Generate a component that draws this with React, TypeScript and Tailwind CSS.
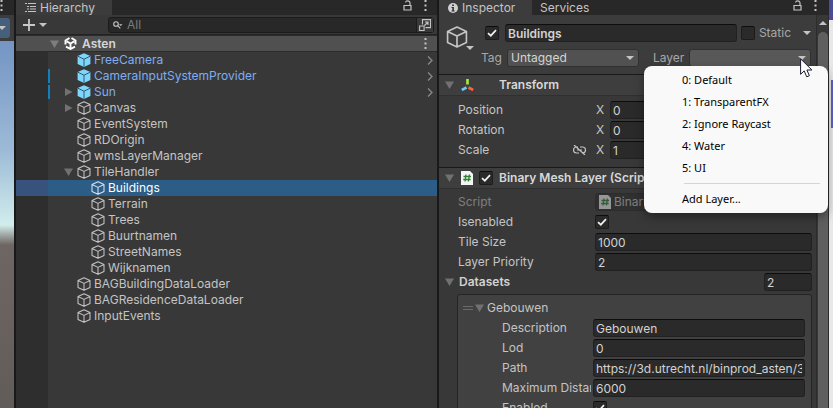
import type { ReactNode } from "react";

type NodeKind = "prefab" | "object";

interface TreeNode {
  name: string;
  kind: NodeKind;
  depth: number;
  fold?: "open" | "closed";
  overridden?: boolean;
  selected?: boolean;
}

const nodes: TreeNode[] = [
  { name: "FreeCamera", kind: "prefab", depth: 0 },
  { name: "CameraInputSystemProvider", kind: "prefab", depth: 0, overridden: true },
  { name: "Sun", kind: "prefab", depth: 0, fold: "closed", overridden: true },
  { name: "Canvas", kind: "object", depth: 0, fold: "closed" },
  { name: "EventSystem", kind: "object", depth: 0 },
  { name: "RDOrigin", kind: "object", depth: 0 },
  { name: "wmsLayerManager", kind: "object", depth: 0 },
  { name: "TileHandler", kind: "object", depth: 0, fold: "open" },
  { name: "Buildings", kind: "object", depth: 1, selected: true },
  { name: "Terrain", kind: "object", depth: 1 },
  { name: "Trees", kind: "object", depth: 1 },
  { name: "Buurtnamen", kind: "object", depth: 1 },
  { name: "StreetNames", kind: "object", depth: 1 },
  { name: "Wijknamen", kind: "object", depth: 1 },
  { name: "BAGBuildingDataLoader", kind: "object", depth: 0 },
  { name: "BAGResidenceDataLoader", kind: "object", depth: 0 },
  { name: "InputEvents", kind: "object", depth: 0 },
];

const layers = ["0: Default", "1: TransparentFX", "2: Ignore Raycast", "4: Water", "5: UI"];

function Cube({ className = "size-[14px]" }: { className?: string }) {
  return (
    <svg viewBox="0 0 14 14" className={className} fill="none" stroke="currentColor" strokeWidth="1.05" strokeLinejoin="round">
      <path d="M7 .7 13 3.5v7L7 13.3 1 10.5v-7zM1 3.5l6 2.9 6-2.9M7 6.4v6.9" />
    </svg>
  );
}

function PrefabCube() {
  return (
    <svg viewBox="0 0 14 14" className="size-[14px]">
      <path d="M7 .2 13.4 3v8L7 13.9.6 11V3z" fill="#7fd6fd" />
      <path d="M.8 3.2 7 6.2l6.2-3M7 6.2v7.6" fill="none" stroke="#2e5a70" strokeWidth="1" />
    </svg>
  );
}

function Triangle({ closed = false, className = "text-[#717171]" }: { closed?: boolean; className?: string }) {
  return (
    <svg viewBox="0 0 9 8" className={`h-2 w-[9px] shrink-0 ${className}`} fill="currentColor">
      {closed ? <path d="M1 0 8.500 4 1 8z" /> : <path d="M0 .5h9L4.500 8z" />}
    </svg>
  );
}

function Caret({ className = "" }: { className?: string }) {
  return (
    <svg viewBox="0 0 8 4" className={`h-1 w-2 shrink-0 ${className}`} fill="#c4c4c4">
      <path d="M0 0h8L4 4z" />
    </svg>
  );
}

function Lock() {
  return (
    <svg viewBox="0 0 9 12" className="h-3 w-[9px]" fill="none" stroke="#c4c4c4" strokeWidth="1.2">
      <path d="M1 6.500h7v4.500H1zM7 6.500V3.700C7 1.500 3 1 2.500 3.500" />
    </svg>
  );
}

function Dots() {
  return (
    <svg viewBox="0 0 3 11" className="h-[11px] w-[3px]" fill="#c4c4c4">
      <path d="M.5 0h2v2h-2zM.5 4.500h2v2h-2zM.5 9h2v2h-2z" />
    </svg>
  );
}

function ScriptIcon() {
  return (
    <svg viewBox="0 0 12 14" className="h-[14px] w-3 shrink-0">
      <path d="M0 0h9l3 3v11H0z" fill="#f4f4f4" />
      <path d="M5 3.500 4 10.500M8.400 3.500 7.400 10.500M2.500 5.500h7.500M2.200 8.500h7.500" stroke="#2f8136" strokeWidth="1.300" fill="none" />
    </svg>
  );
}

function Check({ label, checked = false }: { label: string; checked?: boolean }) {
  return (
    <span className="grid size-[14px] shrink-0">
      <input
        type="checkbox"
        aria-label={label}
        defaultChecked={checked}
        className="peer col-start-1 row-start-1 size-[14px] appearance-none rounded-[2px] border border-[#1c1c1c] border-t-[#0d0d0d] bg-[#2a2a2a]"
      />
      <svg viewBox="0 0 14 14" className="pointer-events-none invisible col-start-1 row-start-1 size-[14px] peer-checked:visible" fill="none" stroke="#f0f0f0" strokeWidth="1.700">
        <path d="M3 7.200 5.800 9.700 11 4.200" />
      </svg>
    </span>
  );
}

const fieldClass =
  "h-[18px] min-w-0 rounded-[3px] border border-[#212121] border-t-[#0d0d0d] bg-[#2a2a2a] px-[2px] text-[#d2d2d2] outline-none";

function Row({ id, label, children }: { id?: string; label: string; children: ReactNode }) {
  return (
    <div className="flex h-5 items-center">
      <label htmlFor={id} className="w-[137px] shrink-0">{label}</label>
      {children}
    </div>
  );
}

function DataRow({ id, label, children }: { id?: string; label: string; children: ReactNode }) {
  return (
    <div className="flex h-5 items-center gap-[2px]">
      <label htmlFor={id} className="w-[89px] shrink-0 overflow-hidden whitespace-nowrap">{label}</label>
      {children}
    </div>
  );
}

function SceneEdge() {
  return (
    <div className="flex w-4 shrink-0 flex-col border-r-2 border-[#191919] bg-[#3c3c3c]">
      <div className="h-[15px] bg-[#282828]"><Dots /></div>
      <div className="flex h-[26px] items-center">
        <div className="flex h-5 w-[10px] items-center rounded-r-[3px] bg-[#46607c]"><Caret className="-ml-0.5" /></div>
      </div>
      <div className="h-[184px] bg-linear-to-b from-[#7494c3] via-[#9dbbd7] via-60% to-[#d2edec]" />
      <div className="h-[20px] bg-linear-to-b from-[#d2edec] to-[#6e6662]" />
      <div className="flex-1 bg-linear-to-b from-[#6e6662] to-[#625c58]" />
    </div>
  );
}

function Hierarchy() {
  return (
    <section aria-label="Hierarchy" className="flex w-[423px] shrink-0 flex-col border-r-2 border-[#191919]">
      <header className="flex h-[15px] items-center justify-between bg-[#282828] pr-[10px]">
        <div className="flex h-full w-24 items-center gap-1 bg-[#3c3c3c] pl-[9px]">
          <svg viewBox="0 0 11 9" className="h-[9px] w-[11px]" stroke="#c4c4c4" fill="none">
            <path d="M0 .5h2M3 .5h8M2 3.500h2M5 3.500h6M2 6h2M5 6h6M0 8.500h2M3 8.500h8" />
          </svg>
          <h2>Hierarchy</h2>
        </div>
        <div className="flex items-center gap-3 pb-[5px]"><Lock /><Dots /></div>
      </header>
      <div className="flex h-5 items-center border-b border-[#232323] pl-[7px] pr-[3px]">
        <button aria-label="Create" className="flex items-center gap-1">
          <svg viewBox="0 0 12 12" className="size-3" stroke="#c8c8c8" strokeWidth="1.800"><path d="M6 0v12M0 6h12" /></svg>
          <Caret />
        </button>
        <div className="ml-[61px] flex h-4 flex-1 items-center rounded-[3px] border border-[#1b1b1b] bg-[#282828] pl-1">
          <svg viewBox="0 0 10 8" className="h-2 w-[10px]" fill="none" stroke="#c4c4c4" strokeWidth="1.100">
            <circle cx="3" cy="3" r="2.300" /><path d="m4.700 4.700 2.600 2.600" /><path d="M6 3.200h3.500L7.750 5z" fill="#c4c4c4" stroke="none" />
          </svg>
          <input aria-label="Search" placeholder="All" className="ml-1 min-w-0 flex-1 bg-transparent outline-none placeholder:text-[#7c7c7c]" />
          <button aria-label="Open search window" className="flex h-full w-[17px] items-center justify-center border-l border-[#1b1b1b] bg-[#3a3a3a]">
            <svg viewBox="0 0 12 12" className="size-3" fill="none" stroke="#c4c4c4" strokeWidth="1.100">
              <path d="M3.500 5.500V.6h8v8H6.500M.6 7h4.500v4.500H.6zM5.500 6.500l3.500-3.500M6 3h3v3" />
            </svg>
          </button>
        </div>
      </div>
      <div className="flex h-[17px] items-center justify-between border-y border-[#2b2b2b] bg-[#505050] pl-[34px] pr-[10px] font-semibold text-[#d6d6d6]">
        <span className="flex items-center">
          <Triangle className="text-[#7d7d7d]" />
          <svg viewBox="0 0 13 13" className="mx-[5px] size-[13px]" fill="none" stroke="#fff" strokeWidth="1.900">
            <path d="M5.500 1 1.500 3.500v4M7.500 1l4 2.500v4M2 9.700 6.500 12 11 9.700M6.500 6.500V11M6.500 6.500 2.800 4.400M6.500 6.500l3.700-2.100" />
          </svg>
          Asten
        </span>
        <Dots />
      </div>
      <ul className="flex-1 bg-linear-to-r from-[#2e2e2e] from-[32px] to-[#383838] to-[32px]">
        {nodes.map((n) => (
          <li key={n.name} className={`flex h-4 ${n.selected ? "bg-[#2c5d87] text-white" : n.kind === "prefab" ? "text-[#7fadf0]" : ""}`}>
            <span className={`w-8 shrink-0 ${n.selected ? "bg-[#37527d]" : ""}`} />
            <span className={`my-px w-[2px] shrink-0 ${n.overridden ? "bg-[#0f81be]" : ""}`} />
            <span className={`flex flex-1 items-center ${n.depth ? "pl-[28px]" : "pl-[14px]"}`}>
              <span className="flex w-[13px] shrink-0">{n.fold && <Triangle closed={n.fold === "closed"} />}</span>
              <span className={n.selected ? "text-[#d5e3ef]" : "text-[#c4c4c4]"}>{n.kind === "prefab" ? <PrefabCube /> : <Cube />}</span>
              <span className="ml-[3px]">{n.name}</span>
            </span>
            {n.kind === "prefab" && (
              <svg viewBox="0 0 6 9" className="mr-1 h-[9px] w-[6px] self-center" fill="none" stroke="#8a8a8a" strokeWidth="1.300"><path d="m1 .5 4 4-4 4" /></svg>
            )}
          </li>
        ))}
      </ul>
    </section>
  );
}

function LayerMenu() {
  return (
    <div role="menu" className="absolute left-[-45px] top-[17px] z-10 flex w-[184px] flex-col rounded-lg bg-[#f9f9f9] py-[3px] font-['Noto_Sans',sans-serif] text-[11px] text-black shadow-[0_4px_10px_rgba(0,0,0,0.35)]">
      {layers.map((l) => (
        <button key={l} role="menuitem" className="h-[22px] pl-[38px] text-left">{l}</button>
      ))}
      <hr className="mb-1 ml-10 mr-2 mt-1 border-[#d5d5d5]" />
      <button role="menuitem" className="h-[22px] pl-[38px] text-left">Add Layer...</button>
    </div>
  );
}

function Cursor() {
  return (
    <svg viewBox="0 0 13 20" className="pointer-events-none absolute right-[-2px] top-[9px] z-20 h-5 w-[13px]">
      <path d="M.6.8v15.500l3.600-3.400 2.500 5.900 2.700-1.100-2.500-5.700h5z" fill="#fff" stroke="#1b1b30" />
    </svg>
  );
}

function Inspector() {
  return (
    <section aria-label="Inspector" className="flex min-w-0 flex-1 flex-col">
      <header className="flex h-[15px] shrink-0 items-center bg-[#282828] pr-3">
        <div className="flex h-full w-[93px] items-center gap-1 bg-[#3c3c3c] pl-[9px]">
          <svg viewBox="0 0 10 10" className="size-[10px]"><circle cx="5" cy="5" r="5" fill="#d0d0d0" /><path d="M4.200 1.500h1.700v1.600H4.200zM3.500 4h2.400v3.500h.8v1H3.500v-1h.8V5h-.8z" fill="#333" /></svg>
          <h2>Inspector</h2>
        </div>
        <span className="flex-1 pl-2">Services</span>
        <div className="flex items-center gap-3 pb-[5px]"><Lock /><Dots /></div>
      </header>
      <div className="flex min-h-0 flex-1">
        <div className="min-w-0 flex-1">
          <div className="flex h-[59px] bg-[#3c3c3c] pl-[7px] pr-[5px] pt-[9px]">
            <div className="flex w-[34px] shrink-0 pt-[2px] text-[#c4c4c4]">
              <Cube className="size-[22px] shrink-0" />
              <Caret className="-ml-0.5 mt-5" />
            </div>
            <div className="flex min-w-0 flex-1 flex-col gap-[7px]">
              <div className="flex items-center">
                <span className="ml-[5px]"><Check label="Active" checked /></span>
                <input aria-label="Name" defaultValue="Buildings" className={`${fieldClass} ml-[6px] flex-1 font-semibold`} />
                <label className="ml-1 flex items-center gap-1 text-[#a8a8a8]"><Check label="Static" />Static</label>
                <button aria-label="Static options" className="ml-3 flex"><Caret /></button>
              </div>
              <div className="flex items-center text-[#a8a8a8]">
                <label htmlFor="tag" className="w-[27px] shrink-0 pl-[1px]">Tag</label>
                <div className="grid w-[132px] shrink-0 items-center">
                  <select id="tag" className="col-start-1 row-start-1 h-[18px] appearance-none rounded-[3px] border border-[#303030] bg-[#515151] pl-[3px] text-[#d4d4d4]">
                    <option>Untagged</option>
                  </select>
                  <Caret className="pointer-events-none col-start-1 row-start-1 mr-[5px] justify-self-end" />
                </div>
                <label htmlFor="layer" className="ml-[14px] w-9 shrink-0">Layer</label>
                <div className="relative grid min-w-0 flex-1 items-center">
                  <select id="layer" className="col-start-1 row-start-1 h-[18px] appearance-none rounded-[3px] border border-[#303030] bg-[#585858]">
                    <option></option>
                  </select>
                  <Caret className="pointer-events-none col-start-1 row-start-1 mr-[5px] justify-self-end" />
                  <LayerMenu />
                  <Cursor />
                </div>
              </div>
            </div>
          </div>
          <div className="flex h-[22px] items-center border-y border-t-[#191919] border-b-[#303030] bg-[#3e3e3e] pl-[6px] font-semibold text-[#d8d8d8]">
            <Triangle />
            <svg viewBox="0 0 13 12" className="ml-[7px] h-3 w-[13px]" fill="none" strokeWidth="2.600">
              <path d="M6.500 0v5.500" stroke="#a7ee43" /><path d="M5.500 8.500.8 11" stroke="#6fc8f5" /><path d="m7.500 8.500 4.700 2.500" stroke="#f2673c" />
            </svg>
            <h3 className="ml-[25px]">Transform</h3>
          </div>
          <div className="h-[71px] pl-[19px] pr-[5px] pt-1">
            {[["Position", "0"], ["Rotation", "0"], ["Scale", "1"]].map(([label, value]) => (
              <div key={label} className="flex h-5 items-center">
                <span className="w-[115px] shrink-0">{label}</span>
                <span className="w-[22px] shrink-0">
                  {label === "Scale" && (
                    <svg viewBox="0 0 13 10" className="h-[10px] w-[13px]" fill="none" stroke="#c4c4c4" strokeWidth="1.200">
                      <path d="M5 2H3.500a3 3 0 0 0 0 6H6M7 2h2.500a3 3 0 0 1 0 6H9M4 5h5M1 0l11 10" />
                    </svg>
                  )}
                </span>
                {["X", "Y", "Z"].map((axis) => (
                  <label key={axis} className="flex min-w-0 flex-1 items-center pr-[2px]">
                    <span className="w-[15px] shrink-0 pl-[1px]">{axis}</span>
                    <input defaultValue={value} className={`${fieldClass} w-full`} />
                  </label>
                ))}
              </div>
            ))}
          </div>
          <div className="flex h-[22px] items-center border-y border-t-[#191919] border-b-[#303030] bg-[#3e3e3e] pl-[6px] font-semibold text-[#d8d8d8]">
            <Triangle />
            <span className="ml-[7px] mr-[6px]"><ScriptIcon /></span>
            <Check label="Component enabled" checked />
            <h3 className="ml-[6px] whitespace-nowrap">Binary Mesh Layer (Script)</h3>
          </div>
          <div className="pl-[19px] pr-[4px] pt-[3px]">
            <div className="opacity-50">
              <Row label="Script">
                <div className="flex h-[18px] flex-1 items-center gap-[3px] rounded-[3px] border border-[#212121] bg-[#2a2a2a] pl-[3px]">
                  <ScriptIcon />BinaryMeshLayer
                </div>
              </Row>
            </div>
            <Row label="Isenabled"><Check label="Isenabled" checked /></Row>
            <Row id="tile" label="Tile Size"><input id="tile" defaultValue="1000" className={`${fieldClass} flex-1`} /></Row>
            <Row id="priority" label="Layer Priority"><input id="priority" defaultValue="2" className={`${fieldClass} flex-1`} /></Row>
            <div className="-ml-[13px] flex h-5 items-center font-semibold text-[#d2d2d2]">
              <Triangle />
              <label htmlFor="count" className="ml-[5px] flex-1">Datasets</label>
              <input id="count" defaultValue="2" className={`${fieldClass} w-12 font-normal`} />
            </div>
          </div>
          <div className="ml-[18px] mr-1 mt-[2px] rounded-t-[3px] border border-[#242424] bg-[#414141] pb-10 pl-[5px] pr-[6px] pt-[3px]">
            <div className="flex h-5 items-center">
              <svg viewBox="0 0 10 4" className="h-1 w-[10px]" stroke="#6a6a6a"><path d="M0 .5h10M0 3.500h10" /></svg>
              <span className="ml-[2px] mr-[3px] flex"><Triangle /></span>
              Gebouwen
            </div>
            <div className="pl-[39px]">
              <DataRow id="desc" label="Description"><input id="desc" defaultValue="Gebouwen" className={`${fieldClass} flex-1`} /></DataRow>
              <DataRow id="lod" label="Lod"><input id="lod" defaultValue="0" className={`${fieldClass} flex-1`} /></DataRow>
              <DataRow id="path" label="Path"><input id="path" defaultValue="https://3d.utrecht.nl/binprod_asten/3d/buildings" className={`${fieldClass} flex-1`} /></DataRow>
              <DataRow id="dist" label="Maximum Distance"><input id="dist" defaultValue="6000" className={`${fieldClass} flex-1`} /></DataRow>
              <DataRow label="Enabled"><Check label="Enabled" checked /></DataRow>
            </div>
          </div>
        </div>
        <div className="flex w-[13px] shrink-0 flex-col items-center border-x border-[#2c2c2c] bg-[#373737] pt-[6px]">
          <svg viewBox="0 0 8 4" className="h-1 w-2" fill="#c4c4c4"><path d="M0 4h8L4 0z" /></svg>
          <div className="mt-[7px] w-[10px] flex-1 rounded-t-[5px] bg-[#5f5f5f]" />
        </div>
      </div>
    </section>
  );
}

export default function App() {
  return (
    <main className="flex h-screen overflow-hidden bg-[#383838] font-[Inter,sans-serif] text-[12px] leading-4 text-[#c4c4c4]">
      <SceneEdge />
      <Hierarchy />
      <Inspector />
      <div className="flex w-1 shrink-0 flex-col items-end bg-[#e8e8e8]">
        <div className="h-5 w-full bg-[#4b4a96]" />
        <div className="mt-[60px] h-12 w-[2px] bg-[#5b5fc7]" />
      </div>
    </main>
  );
}
